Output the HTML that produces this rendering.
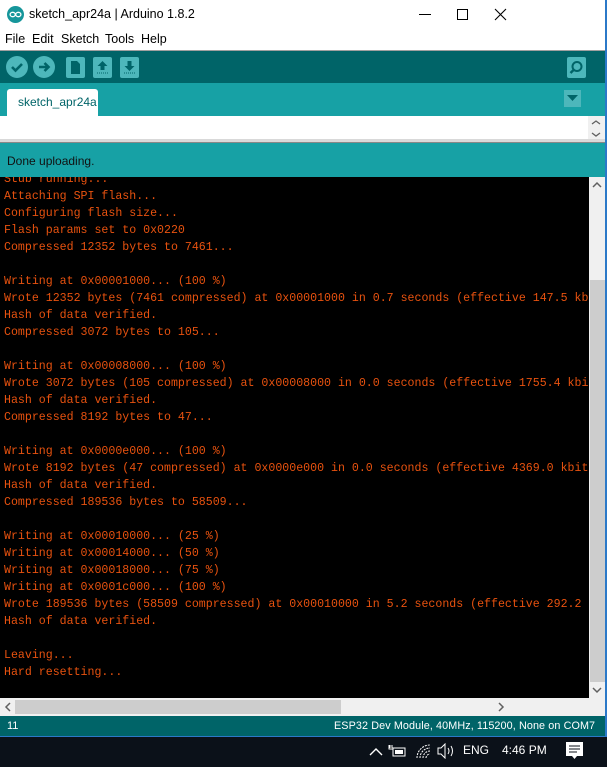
<!DOCTYPE html>
<html><head><meta charset="utf-8"><style>
*{margin:0;padding:0;box-sizing:border-box}
body{width:607px;height:767px;overflow:hidden;background:#0b1119;font-family:"Liberation Sans",sans-serif;position:relative}
.abs{position:absolute;white-space:nowrap}
#win{left:0;top:0;width:607px;height:737px;background:#fff;border-right:2px solid #2b79c8;border-bottom:1px solid #2b79c8}
.title{top:7px;font-size:12.5px;color:#000}
.menu{top:32px;font-size:12.5px;color:#000}
.mono{font-family:"Liberation Mono",monospace;font-size:11.6px;color:#e8520f;line-height:17px;white-space:pre}
</style></head><body>
<div id="win" class="abs"></div>
<svg class="abs" style="left:7px;top:6px" width="17" height="17"><circle cx="8.5" cy="8.5" r="8.5" fill="#16969b"/><ellipse cx="5.7" cy="8.5" rx="2.6" ry="2.2" fill="none" stroke="#fff" stroke-width="1.3"/><ellipse cx="11.3" cy="8.5" rx="2.6" ry="2.2" fill="none" stroke="#fff" stroke-width="1.3"/></svg>
<div class="abs title" style="left:29px">sketch_apr24a | Arduino 1.8.2</div>
<div class="abs" style="left:419px;top:14px;width:12px;height:1px;background:#000"></div>
<div class="abs" style="left:457px;top:9px;width:11px;height:11px;border:1px solid #000"></div>
<svg class="abs" style="left:494px;top:8px" width="13" height="13"><path d="M1 1L12 12M12 1L1 12" stroke="#000" stroke-width="1.1"/></svg>
<div class="abs menu" style="left:5px">File</div>
<div class="abs menu" style="left:32px">Edit</div>
<div class="abs menu" style="left:61px">Sketch</div>
<div class="abs menu" style="left:105px">Tools</div>
<div class="abs menu" style="left:141px">Help</div>
<div class="abs" style="left:0;top:50px;width:605px;height:1px;background:#a0a0a0"></div>
<div class="abs" style="left:0;top:51px;width:605px;height:32px;background:#006468"></div>
<svg class="abs" style="left:5px;top:55px" width="24" height="24"><circle cx="12" cy="12" r="11" fill="#4db7bb"/><path d="M7 12l3.5 3.5L17 9" stroke="#006468" stroke-width="2.6" fill="none"/></svg>
<svg class="abs" style="left:32px;top:55px" width="24" height="24"><circle cx="12" cy="12" r="11" fill="#4db7bb"/><path d="M7 12h9M12.5 8l4 4-4 4" stroke="#006468" stroke-width="2.6" fill="none"/></svg>
<svg class="abs" style="left:66px;top:57px" width="19" height="21"><rect width="19" height="21" rx="2" fill="#4db7bb"/><path d="M5 4h6l3 3v10H5z" fill="#006468"/></svg>
<svg class="abs" style="left:93px;top:57px" width="19" height="21"><rect width="19" height="21" rx="2" fill="#4db7bb"/><path d="M9.5 4l5 5h-3v4h-4V9h-3z" fill="#006468"/><path d="M4 16h11" stroke="#006468" stroke-dasharray="1 1"/></svg>
<svg class="abs" style="left:120px;top:57px" width="19" height="21"><rect width="19" height="21" rx="2" fill="#4db7bb"/><path d="M9.5 14l5-5h-3V4h-4v5h-3z" fill="#006468"/><path d="M4 16h11" stroke="#006468" stroke-dasharray="1 1"/></svg>
<svg class="abs" style="left:567px;top:57px" width="19" height="21"><rect width="19" height="21" rx="2" fill="#4db7bb"/><circle cx="10" cy="9.5" r="4.5" fill="none" stroke="#006468" stroke-width="2"/><path d="M6.5 13l-3 3" stroke="#006468" stroke-width="2.4"/></svg>
<div class="abs" style="left:0;top:83px;width:605px;height:33px;background:#17a1a5"></div>
<div class="abs" style="left:7px;top:89px;width:91px;height:27px;background:#fff;border-radius:3px 3px 0 0"></div>
<div class="abs" style="left:18px;top:95px;font-size:12px;color:#006468">sketch_apr24a</div>
<div class="abs" style="left:564px;top:90px;width:17px;height:17px;background:#4db7bb"></div>
<svg class="abs" style="left:567px;top:95px" width="11" height="7"><path d="M0 0h11L5.5 6z" fill="#006468"/></svg>
<div class="abs" style="left:588px;top:116px;width:17px;height:24px;background:#f0f0f0"></div>
<svg class="abs" style="left:590px;top:119px" width="12" height="20"><path d="M2 5l4-3 4 3M2 14l4 3 4-3" stroke="#606060" stroke-width="1.3" fill="none"/></svg>
<div class="abs" style="left:0;top:139px;width:605px;height:4px;background:#d9d9d9;border-bottom:1px solid #888"></div>
<div class="abs" style="left:0;top:143px;width:605px;height:34px;background:#17a1a5"></div>
<div class="abs" style="left:7px;top:154px;font-size:12px;color:#111">Done uploading.</div>
<div class="abs" style="left:0;top:177px;width:589px;height:521px;background:#000;overflow:hidden">
<div class="mono abs" style="left:4px;top:-6px">Stub running...
Attaching SPI flash...
Configuring flash size...
Flash params set to 0x0220
Compressed 12352 bytes to 7461...

Writing at 0x00001000... (100 %)
Wrote 12352 bytes (7461 compressed) at 0x00001000 in 0.7 seconds (effective 147.5 kbit/s)...
Hash of data verified.
Compressed 3072 bytes to 105...

Writing at 0x00008000... (100 %)
Wrote 3072 bytes (105 compressed) at 0x00008000 in 0.0 seconds (effective 1755.4 kbit/s)...
Hash of data verified.
Compressed 8192 bytes to 47...

Writing at 0x0000e000... (100 %)
Wrote 8192 bytes (47 compressed) at 0x0000e000 in 0.0 seconds (effective 4369.0 kbit/s)...
Hash of data verified.
Compressed 189536 bytes to 58509...

Writing at 0x00010000... (25 %)
Writing at 0x00014000... (50 %)
Writing at 0x00018000... (75 %)
Writing at 0x0001c000... (100 %)
Wrote 189536 bytes (58509 compressed) at 0x00010000 in 5.2 seconds (effective 292.2 kbit/s)...
Hash of data verified.

Leaving...
Hard resetting...</div></div>
<div class="abs" style="left:589px;top:177px;width:16px;height:521px;background:#f0f0f0"></div>
<div class="abs" style="left:590px;top:280px;width:15px;height:402px;background:#cdcdcd"></div>
<svg class="abs" style="left:592px;top:181px" width="10" height="8"><path d="M1 6l4-4 4 4" stroke="#606060" stroke-width="1.5" fill="none"/></svg>
<svg class="abs" style="left:592px;top:686px" width="10" height="8"><path d="M1 2l4 4 4-4" stroke="#606060" stroke-width="1.5" fill="none"/></svg>
<div class="abs" style="left:0;top:698px;width:605px;height:18px;background:#f0f0f0"></div>
<div class="abs" style="left:15px;top:700px;width:326px;height:14px;background:#cdcdcd"></div>
<svg class="abs" style="left:4px;top:702px" width="8" height="10"><path d="M6 1L2 5l4 4" stroke="#606060" stroke-width="1.5" fill="none"/></svg>
<svg class="abs" style="left:497px;top:702px" width="8" height="10"><path d="M2 1l4 4-4 4" stroke="#606060" stroke-width="1.5" fill="none"/></svg>
<div class="abs" style="left:0;top:716px;width:605px;height:20px;background:#006468"></div>
<div class="abs" style="left:7px;top:720px;font-size:11px;color:#fff">11</div>
<div class="abs" style="left:334px;top:720px;font-size:10.8px;color:#fff;letter-spacing:0.1px">ESP32 Dev Module, 40MHz, 115200, None on COM7</div>
<svg class="abs" style="left:369px;top:747px" width="14" height="9"><path d="M1 8l6-6 6 6" stroke="#fff" stroke-width="1.4" fill="none"/></svg>
<svg class="abs" style="left:388px;top:744px" width="18" height="14"><rect x="5" y="4" width="12" height="8" fill="none" stroke="#fff"/><rect x="7" y="6" width="8" height="4" fill="#fff"/><path d="M1 1v4h4M2 1v3M4 1v3" stroke="#fff"/></svg>
<svg class="abs" style="left:415px;top:743px" width="16" height="16"><path d="M2 15a13 13 0 0 1 13-13M5 15a10 10 0 0 1 10-10M8 15a7 7 0 0 1 7-7M11 15a4 4 0 0 1 4-4" stroke="#fff" fill="none" stroke-dasharray="2 1"/></svg>
<svg class="abs" style="left:437px;top:743px" width="18" height="16"><path d="M1 5h3l4-4v14l-4-4H1z" stroke="#fff" fill="none"/><path d="M11 5q2 3 0 6M14 3q3 5 0 10" stroke="#fff" fill="none"/></svg>
<div class="abs" style="left:463px;top:743px;font-size:12px;color:#fff">ENG</div>
<div class="abs" style="left:502px;top:743px;font-size:12px;color:#fff">4:46 PM</div>
<svg class="abs" style="left:566px;top:742px" width="17" height="19"><path d="M0 0h17v14H11l-2.5 3L6 14H0z" fill="#fff"/><path d="M3 4h11M3 7h11M3 10h8" stroke="#0b1119"/></svg>
</body></html>
